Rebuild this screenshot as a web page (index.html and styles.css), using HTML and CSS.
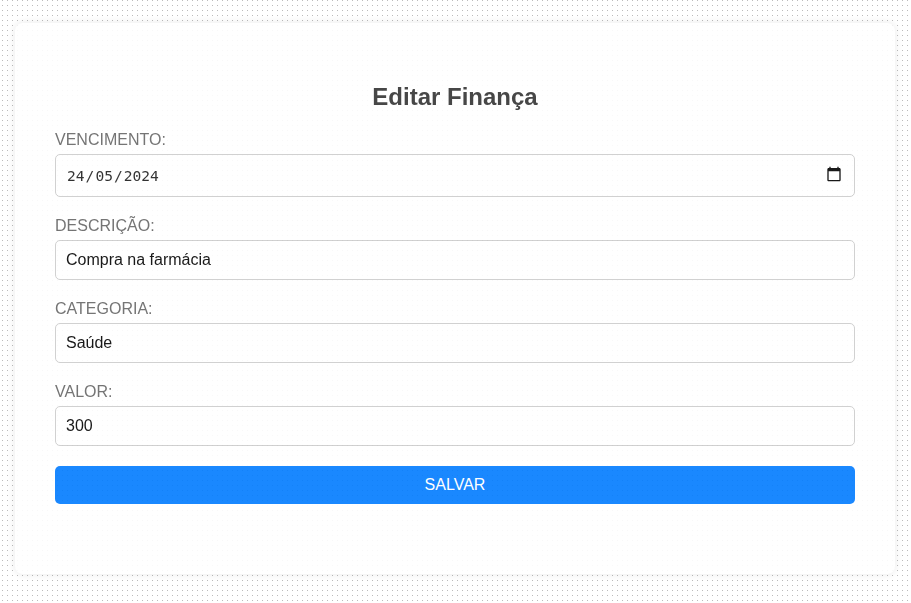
FILE: index.html
```html
<!DOCTYPE html>
<html lang="pt-BR">
<head>
<meta charset="utf-8">
<title>Editar Finança</title>
<link rel="stylesheet" href="styles.css">
</head>
<body>
<main class="card">
  <h1 class="title">Editar Finança</h1>
  <form class="form">
    <label class="label" for="vencimento">VENCIMENTO:</label>
    <div class="field date" id="vencimento" tabindex="0">
      <span class="date-value"><span>24</span><span class="slash">/</span><span>05</span><span class="slash">/</span><span>2024</span></span>
      <svg class="calendar" width="16" height="16" viewBox="0 0 24 24" aria-hidden="true"><path d="M20 3h-1V1h-2v2H7V1H5v2H4c-1.1 0-2 .9-2 2v16c0 1.1.9 2 2 2h16c1.1 0 2-.9 2-2V5c0-1.1-.9-2-2-2zm0 18H4V8h16v13z"/></svg>
    </div>
    <label class="label" for="descricao">DESCRIÇÃO:</label>
    <input class="field" id="descricao" type="text" value="Compra na farmácia" spellcheck="false">
    <label class="label" for="categoria">CATEGORIA:</label>
    <input class="field" id="categoria" type="text" value="Saúde" spellcheck="false">
    <label class="label" for="valor">VALOR:</label>
    <input class="field" id="valor" type="text" value="300">
    <button class="save" type="button">SALVAR</button>
  </form>
</main>
</body>
</html>
```
FILE: styles.css
```css
* {
  box-sizing: border-box;
}

body {
  margin: 0;
  height: 603px;
  padding: 23px 16px 0 15px;
  overflow: hidden;
  font-family: "Liberation Sans", Arial, sans-serif;
  background: radial-gradient(circle, #bbb 0.9px, transparent 0.9px) 0 3px / 5px 5px #fff;
}

.card {
  height: 551px;
  padding: 60px 40px 0;
  background: #fff;
  border-radius: 8px;
  box-shadow: 0 0 10px rgba(0, 0, 0, 0.1);
  opacity: 0.9;
}

.title {
  margin: 0 0 21px;
  font-size: 24px;
  line-height: 27px;
  text-align: center;
  letter-spacing: 0;
  color: #333;
}

.form {
  display: flex;
  flex-direction: column;
}

.label {
  height: 18px;
  margin-bottom: 5px;
  font-size: 16px;
  line-height: 18px;
  color: #666;
}

.field {
  width: 100%;
  height: 40px;
  margin: 0 0 20px;
  padding: 0 10px;
  font-family: inherit;
  font-size: 16px;
  color: #000;
  background: #fff;
  border: 1px solid #ccc;
  border-radius: 5px;
  outline: none;
}

.date {
  display: flex;
  align-items: center;
  justify-content: space-between;
  height: 43px;
  padding: 0 12px 0 11px;
}

.date-value {
  font-family: "DejaVu Sans Mono", monospace;
  font-size: 14.6px;
  color: #1c1c1c;
}

.slash {
  padding: 0 1px;
}

.calendar {
  margin-top: -3px;
}

.save {
  height: 38px;
  padding: 0 0 1px;
  font-family: inherit;
  font-size: 16px;
  color: #fff;
  background: #007bff;
  border: 0;
  border-radius: 5px;
}
```
